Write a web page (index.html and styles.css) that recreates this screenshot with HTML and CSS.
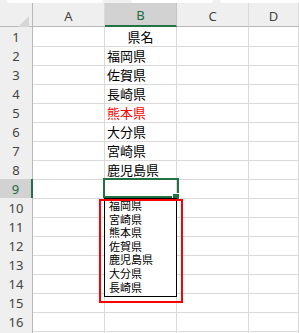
FILE: index.html
```html
<!DOCTYPE html>
<html lang="ja">
<head>
    <meta charset="UTF-8">
    <meta name="viewport" content="width=device-width, initial-scale=1.0">
    <title>県名リスト</title>
    <link rel="stylesheet" href="styles.css">
</head>
<body>
    <div class="topbar">
        <span class="namebox"></span>
        <span class="formula"></span>
        <span class="formula-end"></span>
    </div>
    <div class="sheet">
        <div class="row head">
            <div class="corner"><span class="tri"></span></div>
            <div class="col-head">A</div>
            <div class="col-head active">B</div>
            <div class="col-head">C</div>
            <div class="col-head">D</div>
        </div>
        <div class="row"><div class="num">1</div><div class="cell"></div><div class="cell center">県名</div><div class="cell"></div><div class="cell"></div></div>
        <div class="row"><div class="num">2</div><div class="cell"></div><div class="cell">福岡県</div><div class="cell"></div><div class="cell"></div></div>
        <div class="row"><div class="num">3</div><div class="cell"></div><div class="cell">佐賀県</div><div class="cell"></div><div class="cell"></div></div>
        <div class="row"><div class="num">4</div><div class="cell"></div><div class="cell">長崎県</div><div class="cell"></div><div class="cell"></div></div>
        <div class="row"><div class="num">5</div><div class="cell"></div><div class="cell red">熊本県</div><div class="cell"></div><div class="cell"></div></div>
        <div class="row"><div class="num">6</div><div class="cell"></div><div class="cell">大分県</div><div class="cell"></div><div class="cell"></div></div>
        <div class="row"><div class="num">7</div><div class="cell"></div><div class="cell">宮崎県</div><div class="cell"></div><div class="cell"></div></div>
        <div class="row"><div class="num">8</div><div class="cell"></div><div class="cell">鹿児島県</div><div class="cell"></div><div class="cell"></div></div>
        <div class="row">
            <div class="num active">9</div>
            <div class="cell"></div>
            <div class="cell selected">
                <ul class="dropdown">
                    <li>福岡県</li>
                    <li>宮崎県</li>
                    <li>熊本県</li>
                    <li>佐賀県</li>
                    <li>鹿児島県</li>
                    <li>大分県</li>
                    <li>長崎県</li>
                </ul>
                <div class="mark"></div>
            </div>
            <div class="cell"></div>
            <div class="cell"></div>
        </div>
        <div class="row"><div class="num">10</div><div class="cell"></div><div class="cell"></div><div class="cell"></div><div class="cell"></div></div>
        <div class="row"><div class="num">11</div><div class="cell"></div><div class="cell"></div><div class="cell"></div><div class="cell"></div></div>
        <div class="row"><div class="num">12</div><div class="cell"></div><div class="cell"></div><div class="cell"></div><div class="cell"></div></div>
        <div class="row"><div class="num">13</div><div class="cell"></div><div class="cell"></div><div class="cell"></div><div class="cell"></div></div>
        <div class="row"><div class="num">14</div><div class="cell"></div><div class="cell"></div><div class="cell"></div><div class="cell"></div></div>
        <div class="row"><div class="num">15</div><div class="cell"></div><div class="cell"></div><div class="cell"></div><div class="cell"></div></div>
        <div class="row"><div class="num">16</div><div class="cell"></div><div class="cell"></div><div class="cell"></div><div class="cell"></div></div>
        <div class="row last"><div class="num"></div><div class="cell"></div><div class="cell"></div><div class="cell"></div><div class="cell"></div></div>
    </div>
</body>
</html>
```

FILE: styles.css
```css
* {
    box-sizing: border-box;
}
body {
    margin: 0;
    width: 299px;
    height: 333px;
    overflow: hidden;
    background-color: #ffffff;
    font-family: "Noto Sans", "Noto Sans CJK JP", sans-serif;
}
.topbar {
    display: flex;
    height: 3px;
    background-color: #f0f0f0;
}
.topbar span {
    display: block;
    height: 3px;
    background-color: #ffffff;
    border-radius: 0 0 3px 3px;
}
.namebox {
    width: 96px;
    margin-left: 7px;
}
.formula {
    width: 82px;
    margin-left: 28px;
}
.formula-end {
    flex: 1;
    margin-left: 7px;
}
.row {
    display: grid;
    grid-template-columns: 33px 72px 72px 72px 1fr;
    height: 19px;
}
.row.head {
    height: 24px;
}
.row.last {
    height: 2px;
}
.corner,
.col-head,
.num {
    background-color: #efefef;
    color: #444444;
    font-size: 13px;
}
.corner {
    position: relative;
    border-right: 1px solid #b8b8b8;
    border-bottom: 1px solid #b8b8b8;
}
.tri {
    position: absolute;
    left: 18px;
    top: 13px;
    width: 0;
    height: 0;
    border-left: 11px solid transparent;
    border-bottom: 11px solid #d6d6d6;
}
.col-head {
    display: flex;
    align-items: center;
    justify-content: center;
    padding-top: 2px;
    border-right: 1px solid #dadada;
    border-bottom: 1px solid #b8b8b8;
}
.col-head.active {
    background-color: #d2d2d2;
    color: #1d6b3f;
    border-bottom: 2px solid #217346;
    border-right-color: #c4c4c4;
}
.num {
    display: flex;
    align-items: center;
    justify-content: center;
    border-right: 1px solid #b8b8b8;
    border-bottom: 1px solid #dadada;
    padding-top: 1px;
}
.num.active {
    background-color: #d2d2d2;
    color: #1d6b3f;
    border-right: 2px solid #217346;
}
.cell {
    border-right: 1px solid #dadada;
    border-bottom: 1px solid #dadada;
    padding-left: 2px;
    font-family: "Noto Sans CJK JP", sans-serif;
    font-size: 13px;
    line-height: 19px;
    color: #000000;
    white-space: nowrap;
}
.row.last .cell,
.row.last .num {
    border-bottom: none;
}
.cell.center {
    text-align: center;
    padding-left: 0;
}
.cell.red {
    color: #ff0000;
}
.cell.selected {
    position: relative;
}
.cell.selected::after {
    content: "";
    position: absolute;
    left: -2px;
    top: -1px;
    right: -3px;
    bottom: 0;
    border: 2px solid #217346;
    z-index: 2;
}
.cell.selected::before {
    content: "";
    position: absolute;
    right: -4px;
    bottom: -2px;
    width: 6px;
    height: 5px;
    background-color: #217346;
    border: 1px solid #ffffff;
    z-index: 3;
}
.dropdown {
    position: absolute;
    left: -1px;
    top: 19px;
    width: 73px;
    height: 99px;
    margin: 0;
    padding: 0 0 0 4px;
    list-style: none;
    background-color: #ffffff;
    border: 1px solid #000000;
    font-size: 11px;
    line-height: 13.6px;
    z-index: 4;
}
.mark {
    position: absolute;
    left: -6px;
    top: 20px;
    width: 84px;
    height: 104px;
    border: 2px solid #ff0000;
    z-index: 5;
}
```
